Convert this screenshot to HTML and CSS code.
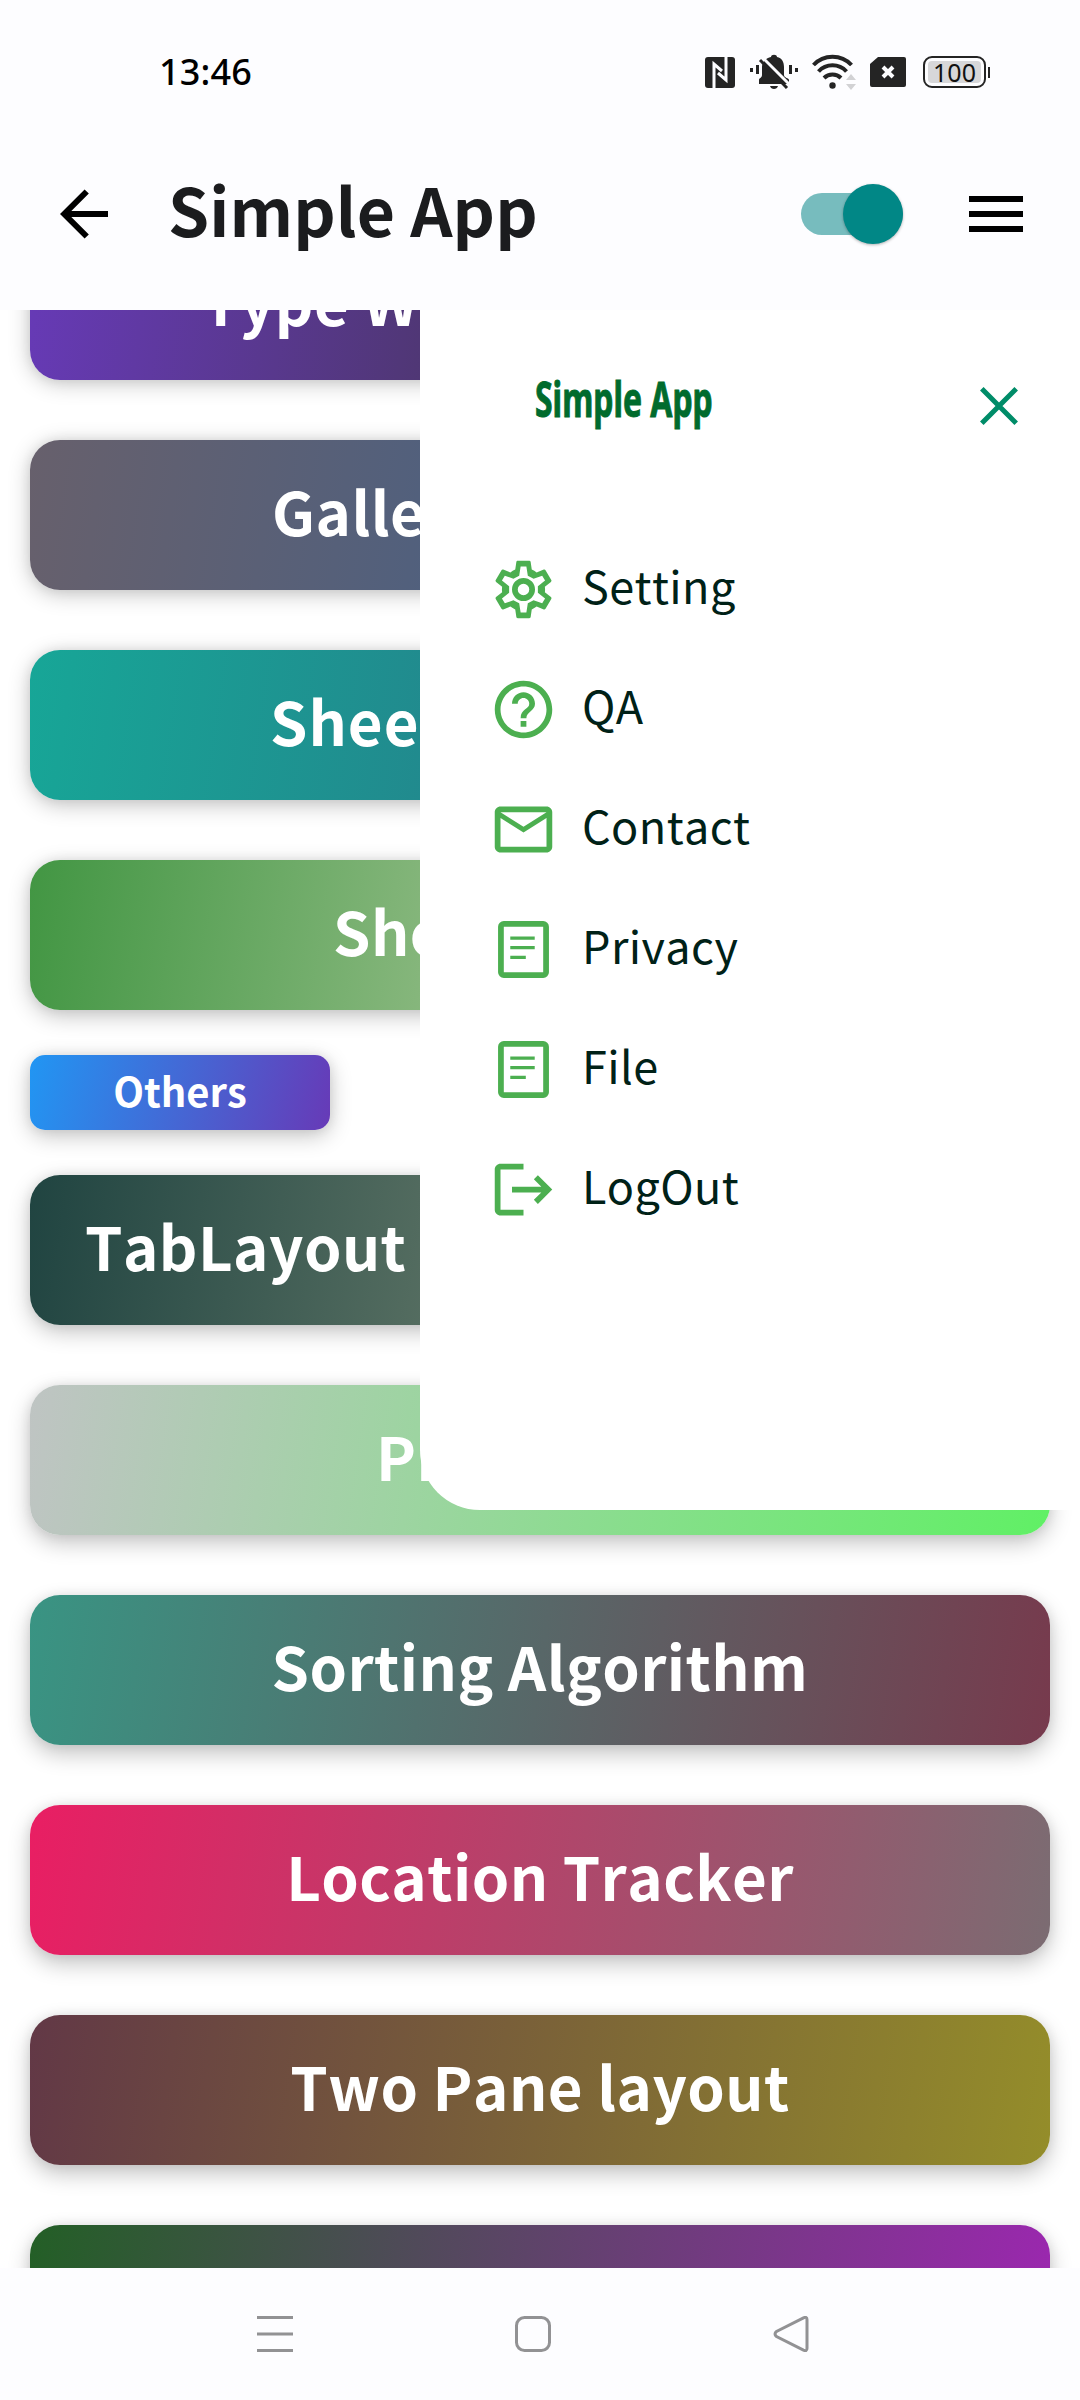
FILE: index.html
```html
<!DOCTYPE html>
<html lang="en">
<head>
<meta charset="utf-8">
<title>Simple App</title>
<link rel="stylesheet" href="styles.css">
</head>
<body>
<div class="screen">
  <header class="status">
    <span class="clock">13:46</span>
    <div class="status-icons">
      <svg class="nfc" width="30" height="32" viewBox="0 0 30 32"><rect y="1" width="30" height="31" rx="3" fill="#242424"/><path d="M9 32V8l8 7M21 0v24l-8-7" fill="none" stroke="#fdfdff" stroke-width="3"/></svg>
      <svg class="bell" width="48" height="36" viewBox="0 0 48 36"><g fill="#242424"><path d="M9 30v-4c0-2 3-2 3-5v-8c0-5 4-9 9-10 0-3 6-3 6 0 5 1 7 5 7 10v8c0 3 5 3 5 5v4zM20 32h8c-1 4-7 4-8 0z"/><path d="M0 14h3v4H0zM6 11h3v9H6zM39 11h3v9h-3zM45 14h3v4h-3z"/></g><path d="M12 3l29 29" stroke="#fdfdff" stroke-width="3"/><path d="M10 6l27 28" stroke="#242424" stroke-width="3"/></svg>
      <svg class="wifi" width="44" height="36" viewBox="0 0 44 36"><g fill="none" stroke="#242424" stroke-width="4"><path d="M1.500 11a26 26 0 0 1 38 0M6.500 17.500a19 19 0 0 1 28 0M12 24a12 12 0 0 1 17 0"/></g><circle cx="20.500" cy="31.500" r="3.200" fill="#242424"/><path d="M34 26l5-6 5 6zM34 30h10l-5 6z" fill="#d2d2d4"/></svg>
      <svg class="sim" width="36" height="30" viewBox="0 0 36 30"><path d="M8 0h26q2 0 2 2v26q0 2-2 2H2q-2 0-2-2V7z" fill="#242424"/><path d="M13 10l10 10M23 10L13 20" stroke="#fdfdff" stroke-width="4"/></svg>
      <div class="battery"><span class="level">100</span></div>
    </div>
  </header>
  <div class="appbar">
    <svg class="back" width="48" height="50" viewBox="0 0 48 50"><path d="M48 25H5M26.700 2.500L4.200 25l22.500 22.500" fill="none" stroke="#000" stroke-width="6"/></svg>
    <h1 class="title">Simple App</h1>
    <div class="switch"><div class="thumb"></div></div>
    <div class="burger"><i></i><i></i><i></i></div>
  </div>
  <main class="content">
    <div class="list">
      <div class="btn type"><span>Type Writer</span></div>
      <div class="btn gallery"><span>Gallery</span></div>
      <div class="btn sheet"><span>Sheet</span></div>
      <div class="btn shop"><span>Shop</span></div>
      <div class="btn others">Others</div>
      <div class="btn tabs"><span>TabLayout</span></div>
      <div class="btn print"><span>Print</span></div>
      <div class="btn sorting">Sorting Algorithm</div>
      <div class="btn location">Location Tracker</div>
      <div class="btn pane">Two Pane layout</div>
      <div class="btn last"></div>
    </div>
    <aside class="drawer">
      <div class="drawer-head">
        <span class="logo">Simple App</span>
        <svg class="close" width="38" height="38" viewBox="0 0 38 38"><path d="M1.800 1.800l34.400 34.400M36.200 1.800L1.800 36.200" stroke="#008c68" stroke-width="5"/></svg>
      </div>
      <nav class="menu">
        <a class="item"><svg class="icon" viewBox="0 0 24 24"><path d="M19.430 12.980c.040-.320.070-.640.070-.980 0-.340-.030-.660-.070-.980l2.110-1.650c.190-.150.240-.420.120-.640l-2-3.460a.500.500 0 0 0-.610-.220l-2.490 1a7.300 7.300 0 0 0-1.690-.980l-.380-2.650A.488.488 0 0 0 14 2h-4c-.250 0-.460.180-.490.420l-.380 2.650c-.610.250-1.170.590-1.690.980l-2.490-1a.500.500 0 0 0-.610.220l-2 3.460c-.130.220-.070.490.120.640l2.110 1.650c-.040.320-.070.650-.070.980s.030.660.070.980l-2.110 1.650c-.190.150-.240.420-.120.640l2 3.460c.120.220.390.300.610.220l2.490-1c.520.400 1.080.730 1.690.980l.380 2.650c.030.240.240.420.490.420h4c.250 0 .460-.180.490-.420l.380-2.650a7.300 7.300 0 0 0 1.690-.980l2.490 1c.230.090.490 0 .610-.220l2-3.460c.120-.220.070-.490-.120-.640zM13 20h-2l-.500-3.200-2-1.100-3 1.100-1-1.700 2.500-2v-2.200l-2.500-2 1-1.700 3 1.100 2-1.100L11 4h2l.500 3.200 2 1.100 3-1.100 1 1.700-2.500 2v2.200l2.500 2-1 1.700-3-1.100-2 1.100zM12 8a4 4 0 1 0 0 8 4 4 0 0 0 0-8zm0 6a2 2 0 1 1 0-4 2 2 0 0 1 0 4z" fill-rule="evenodd"/></svg><span>Setting</span></a>
        <a class="item"><svg class="icon" viewBox="0 0 24 24"><path d="M11 18h2v-2h-2zm1-16C6.480 2 2 6.480 2 12s4.480 10 10 10 10-4.480 10-10S17.520 2 12 2zm0 18c-4.410 0-8-3.590-8-8s3.590-8 8-8 8 3.590 8 8-3.590 8-8 8zm0-14c-2.210 0-4 1.790-4 4h2c0-1.100.900-2 2-2s2 .900 2 2c0 2-3 1.750-3 5h2c0-2.250 3-2.500 3-5 0-2.210-1.790-4-4-4z"/></svg><span>QA</span></a>
        <a class="item"><svg class="icon" viewBox="0 0 24 24"><path d="M22 6c0-1.100-.900-2-2-2H4c-1.100 0-2 .900-2 2v12c0 1.100.900 2 2 2h16c1.100 0 2-.900 2-2zm-2 0l-8 5-8-5zm0 12H4V8l8 5 8-5z"/></svg><span>Contact</span></a>
        <a class="item"><svg class="icon" viewBox="0 0 24 24"><use href="#doc"/></svg><span>Privacy</span></a>
        <a class="item"><svg class="icon" viewBox="0 0 24 24"><g id="doc"><rect x="4.150" y="3.100" width="15.700" height="17.800" rx="1" fill="none" stroke="#4caf50" stroke-width="2"/><path d="M7.400 7.500h8.500v1.100H7.400zM7.400 10.800h8.500v1.100H7.400zM7.400 14.200h5.400v1.100H7.400z"/></g></svg><span>File</span></a>
        <a class="item"><svg class="icon" viewBox="0 0 24 24"><path d="M17 7l-1.400 1.400 2.600 2.600H8v2h10.200l-2.600 2.600L17 17l5-5zM4 5h8V3H4c-1.100 0-2 .900-2 2v14c0 1.100.900 2 2 2h8v-2H4z"/></svg><span>LogOut</span></a>
      </nav>
    </aside>
  </main>
  <footer class="navbar">
    <svg width="36" height="36" viewBox="0 0 36 36"><path d="M0 1.500h36M0 18h36M0 34.500h36"/></svg>
    <svg width="36" height="36" viewBox="0 0 36 36"><rect x="1.500" y="1.500" width="33" height="33" rx="8"/></svg>
    <svg width="36" height="36" viewBox="0 0 36 36"><path d="M30.500 1.800q3.500-1.500 3.500 2v28.400q0 3.500-3.500 2L3.500 20.500q-3-2.500 0-5z"/></svg>
  </footer>
</div>
</body>
</html>
```
FILE: styles.css
```css
* { box-sizing: border-box; }
body { margin: 0; background: #fff; font-family: "Noto Sans CJK JP", "Noto Sans", sans-serif; font-kerning: none; }
.screen { width: 1080px; height: 2400px; display: flex; flex-direction: column; overflow: hidden; background: #fdfdff; }

.status { height: 118px; display: flex; align-items: center; justify-content: space-between; padding: 26px 90px 0 159px; }
.clock { font: 500 36px/40px "Noto Sans", sans-serif; letter-spacing: .2px; color: #000; }
.status-icons { display: flex; align-items: center; }
.bell { margin-left: 15px; }
.wifi { margin-left: 14px; }
.sim { margin-left: 14px; }
.battery { position: relative; width: 63px; height: 32px; margin-left: 17px; margin-right: 4px; padding: 3px; border: 2px solid #242424; border-radius: 9px; }
.battery::after { content: ""; position: absolute; right: -6px; top: 9px; width: 2px; height: 11px; background: #242424; }
.level { display: block; height: 22px; border-radius: 4px; background: #d7d7d9; color: #111; font: 25px/22px "Noto Sans", sans-serif; text-align: center; }

.appbar { height: 192px; display: flex; align-items: center; padding: 0 57px 0 60px; }
.title { margin: 0 0 13px 60px; flex: 1; font-size: 66px; line-height: 80px; font-weight: 700; letter-spacing: .1px; color: #1b1c1e; }
.switch { position: relative; width: 102px; height: 42px; border-radius: 21px; background: #77bcbe; }
.thumb { position: absolute; right: 0; top: -9px; width: 60px; height: 60px; border-radius: 50%; background: #018786; box-shadow: 0 1px 3px rgba(0,0,0,.3); }
.burger { width: 54px; margin-left: 66px; display: flex; flex-direction: column; gap: 9px; }
.burger i { height: 6px; background: #000; }

.content { position: relative; flex: none; height: 1958px; overflow: hidden; background: #fff; }
.list { display: flex; flex-direction: column; gap: 60px; padding: 0 30px; margin-top: -80px; }
.btn { flex: none; height: 150px; display: flex; align-items: center; justify-content: center; border-radius: 30px; color: #fff; font-size: 60px; line-height: 80px; font-weight: 700; letter-spacing: .45px; white-space: nowrap; padding-bottom: 10px; box-shadow: 0 var(--drop, 9px) 22px rgba(0,0,0,.23), 0 0 12px rgba(0,0,0,.07); }
.btn span { flex: 1; }
.type { background: linear-gradient(98.370deg, #673ab7, #2c3210); padding-left: 172px; --drop: 3px; }
.gallery { background: linear-gradient(98.370deg, #67606c, #306096); padding-left: 242px; --drop: 4px; }
.sheet { background: linear-gradient(98.370deg, #17a697, #306080); padding-left: 240px; letter-spacing: 1px; --drop: 5px; }
.shop { background: linear-gradient(98.370deg, #429643, #eee8d3); padding-left: 303px; --drop: 6px; }
.others { align-self: flex-start; width: 300px; height: 75px; margin: -15px 0; border-radius: 15px; font-size: 40px; letter-spacing: 0; padding-bottom: 5px; background: linear-gradient(104deg, #2196f3, #673ab7); --drop: 6px; }
.tabs { background: linear-gradient(98.370deg, #204441, #a3aa8f); padding-left: 55px; --drop: 7px; }
.print { background: linear-gradient(98.370deg, #bfc4c3, #9bd59f 40%, #60f065); padding-left: 346px; --drop: 8px; }
.sorting { background: linear-gradient(98.370deg, #399483, #773a4d); }
.location { background: linear-gradient(98.370deg, #e91e63, #7b6c72); }
.pane { background: linear-gradient(98.370deg, #623846, #948d2a); }
.last { background: linear-gradient(98.370deg, #235f26, #9c27b0); }

.drawer { position: absolute; left: 420px; top: 0; width: 660px; height: 1200px; background: #fff; border-bottom-left-radius: 60px; padding: 60px 62px 0 69px; }
.drawer-head { height: 72px; display: flex; align-items: center; justify-content: space-between; padding-left: 46px; }
.logo { width: 180px; margin-bottom: 14px; font: 700 48px/60px "Noto Sans", sans-serif; color: #006b2d; -webkit-text-stroke: 1px #006b2d; white-space: nowrap; transform: scaleX(.665); transform-origin: left; }
.menu { display: flex; flex-direction: column; margin-top: 87px; }
.item { height: 120px; display: flex; align-items: center; gap: 24px; font-size: 45px; line-height: 72px; letter-spacing: .4px; color: #002117; }
.item span { margin-bottom: 8px; }
.icon { width: 69px; height: 69px; fill: #4caf50; flex: none; }

.navbar { flex: 1; display: flex; justify-content: center; gap: 222px; padding: 48px 14px 0 0; }
.navbar svg { fill: none; stroke: #929294; stroke-width: 3; }
```
